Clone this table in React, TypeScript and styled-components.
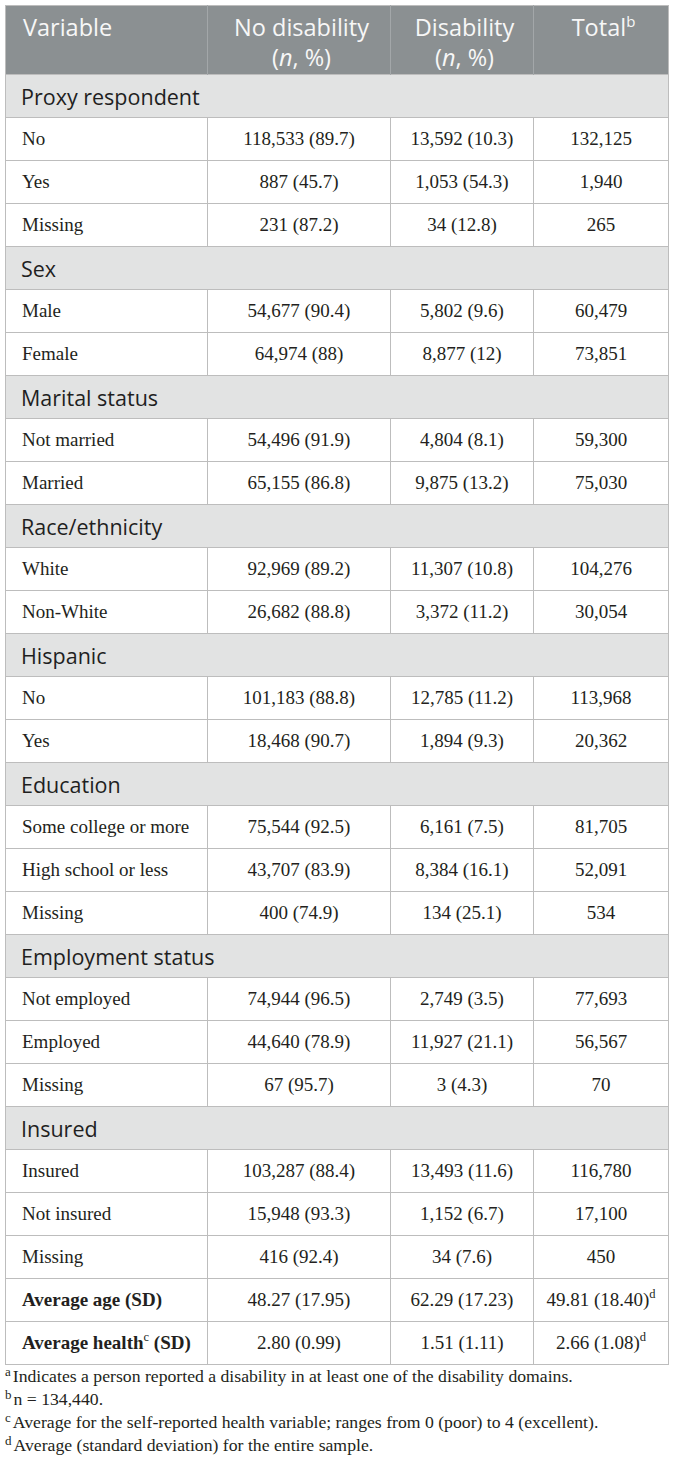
import React from "react";
import styled, { createGlobalStyle } from "styled-components";

const GlobalStyle = createGlobalStyle`
  html, body { margin: 0; padding: 0; background: #ffffff; }
  body { font-family: "Liberation Serif", "Times New Roman", serif; color: #231f20; }
`;

const Page = styled.div`
  padding: 5px 6px 0 5px;
  width: 674px;
  box-sizing: border-box;
`;

const Table = styled.table`
  width: 663px;
  border-collapse: collapse;
  table-layout: fixed;
  border: 1px solid #bdbdbd;
`;

const HeadCell = styled.th<{ $align?: "left" | "center" }>`
  background: #8b9092;
  color: #f7f7f7;
  font-family: "Open Sans", "Liberation Sans", sans-serif;
  font-weight: 400;
  font-size: 23.5px;
  line-height: 30px;
  height: 69px;
  padding: 6px 12px 0 17px;
  box-sizing: border-box;
  text-align: ${(p) => p.$align ?? "center"};
  vertical-align: top;
  border-left: 1px solid #a3a7a9;
  &:first-child { border-left: none; }
  sup { font-size: 15px; line-height: 0; vertical-align: 9px; }
`;

const SectionCell = styled.td`
  background: #e2e3e3;
  font-family: "Open Sans", "Liberation Sans", sans-serif;
  font-size: 21.5px;
  height: 43px;
  padding: 0 15px;
  box-sizing: border-box;
  border-top: 1px solid #bdbdbd;
  color: #1f1f1f;
`;

const Cell = styled.td<{ $first?: boolean; $bold?: boolean }>`
  font-family: "Liberation Serif", "Times New Roman", serif;
  font-size: 19px;
  font-weight: ${(p) => (p.$bold ? 700 : 400)};
  height: 43px;
  padding: 0 ${(p) => (p.$first ? "16px" : "4px")};
  box-sizing: border-box;
  text-align: ${(p) => (p.$first ? "left" : "center")};
  border: 1px solid #bdbdbd;
  white-space: nowrap;
  sup { font-size: 12.5px; line-height: 0; vertical-align: 8px; font-weight: 400; }
`;

const Notes = styled.div`
  padding: 0;
  font-family: "Liberation Serif", "Times New Roman", serif;
  font-size: 17.7px;
  line-height: 23px;
  color: #231f20;
`;

const Note = styled.p`
  margin: 0;
  sup { font-size: 13px; line-height: 0; vertical-align: 6px; margin-right: 2px; }
`;

type Row = { label: React.ReactNode; a: string; b: string; c: React.ReactNode; bold?: boolean };
type Section = { title: string; rows: Row[] };

const sections: Section[] = [
  {
    title: "Proxy respondent",
    rows: [
      { label: "No", a: "118,533 (89.7)", b: "13,592 (10.3)", c: "132,125" },
      { label: "Yes", a: "887 (45.7)", b: "1,053 (54.3)", c: "1,940" },
      { label: "Missing", a: "231 (87.2)", b: "34 (12.8)", c: "265" },
    ],
  },
  {
    title: "Sex",
    rows: [
      { label: "Male", a: "54,677 (90.4)", b: "5,802 (9.6)", c: "60,479" },
      { label: "Female", a: "64,974 (88)", b: "8,877 (12)", c: "73,851" },
    ],
  },
  {
    title: "Marital status",
    rows: [
      { label: "Not married", a: "54,496 (91.9)", b: "4,804 (8.1)", c: "59,300" },
      { label: "Married", a: "65,155 (86.8)", b: "9,875 (13.2)", c: "75,030" },
    ],
  },
  {
    title: "Race/ethnicity",
    rows: [
      { label: "White", a: "92,969 (89.2)", b: "11,307 (10.8)", c: "104,276" },
      { label: "Non-White", a: "26,682 (88.8)", b: "3,372 (11.2)", c: "30,054" },
    ],
  },
  {
    title: "Hispanic",
    rows: [
      { label: "No", a: "101,183 (88.8)", b: "12,785 (11.2)", c: "113,968" },
      { label: "Yes", a: "18,468 (90.7)", b: "1,894 (9.3)", c: "20,362" },
    ],
  },
  {
    title: "Education",
    rows: [
      { label: "Some college or more", a: "75,544 (92.5)", b: "6,161 (7.5)", c: "81,705" },
      { label: "High school or less", a: "43,707 (83.9)", b: "8,384 (16.1)", c: "52,091" },
      { label: "Missing", a: "400 (74.9)", b: "134 (25.1)", c: "534" },
    ],
  },
  {
    title: "Employment status",
    rows: [
      { label: "Not employed", a: "74,944 (96.5)", b: "2,749 (3.5)", c: "77,693" },
      { label: "Employed", a: "44,640 (78.9)", b: "11,927 (21.1)", c: "56,567" },
      { label: "Missing", a: "67 (95.7)", b: "3 (4.3)", c: "70" },
    ],
  },
  {
    title: "Insured",
    rows: [
      { label: "Insured", a: "103,287 (88.4)", b: "13,493 (11.6)", c: "116,780" },
      { label: "Not insured", a: "15,948 (93.3)", b: "1,152 (6.7)", c: "17,100" },
      { label: "Missing", a: "416 (92.4)", b: "34 (7.6)", c: "450" },
    ],
  },
];

const summary: Row[] = [
  {
    label: "Average age (SD)",
    a: "48.27 (17.95)",
    b: "62.29 (17.23)",
    c: (
      <>
        49.81 (18.40)<sup>d</sup>
      </>
    ),
    bold: true,
  },
  {
    label: (
      <>
        Average health<sup>c</sup> (SD)
      </>
    ),
    a: "2.80 (0.99)",
    b: "1.51 (1.11)",
    c: (
      <>
        2.66 (1.08)<sup>d</sup>
      </>
    ),
    bold: true,
  },
];

function DataRow({ row }: { row: Row }) {
  return (
    <tr>
      <Cell $first $bold={row.bold}>{row.label}</Cell>
      <Cell>{row.a}</Cell>
      <Cell>{row.b}</Cell>
      <Cell>{row.c}</Cell>
    </tr>
  );
}

export default function App() {
  return (
    <Page>
      <GlobalStyle />
      <Table>
        <colgroup>
          <col style={{ width: 202 }} />
          <col style={{ width: 183 }} />
          <col style={{ width: 143 }} />
          <col style={{ width: 135 }} />
        </colgroup>
        <thead>
          <tr>
            <HeadCell $align="left">Variable</HeadCell>
            <HeadCell>
              No disability
              <br />(<i>n</i>, %)
            </HeadCell>
            <HeadCell>
              Disability
              <br />(<i>n</i>, %)
            </HeadCell>
            <HeadCell>
              Total<sup>b</sup>
            </HeadCell>
          </tr>
        </thead>
        <tbody>
          {sections.map((s) => (
            <React.Fragment key={s.title}>
              <tr>
                <SectionCell colSpan={4}>{s.title}</SectionCell>
              </tr>
              {s.rows.map((r, i) => (
                <DataRow key={i} row={r} />
              ))}
            </React.Fragment>
          ))}
          {summary.map((r, i) => (
            <DataRow key={`s${i}`} row={r} />
          ))}
        </tbody>
      </Table>
      <Notes>
        <Note>
          <sup>a</sup>Indicates a person reported a disability in at least one of the disability domains.
        </Note>
        <Note>
          <sup>b</sup>n = 134,440.
        </Note>
        <Note>
          <sup>c</sup>Average for the self-reported health variable; ranges from 0 (poor) to 4 (excellent).
        </Note>
        <Note>
          <sup>d</sup>Average (standard deviation) for the entire sample.
        </Note>
      </Notes>
    </Page>
  );
}
